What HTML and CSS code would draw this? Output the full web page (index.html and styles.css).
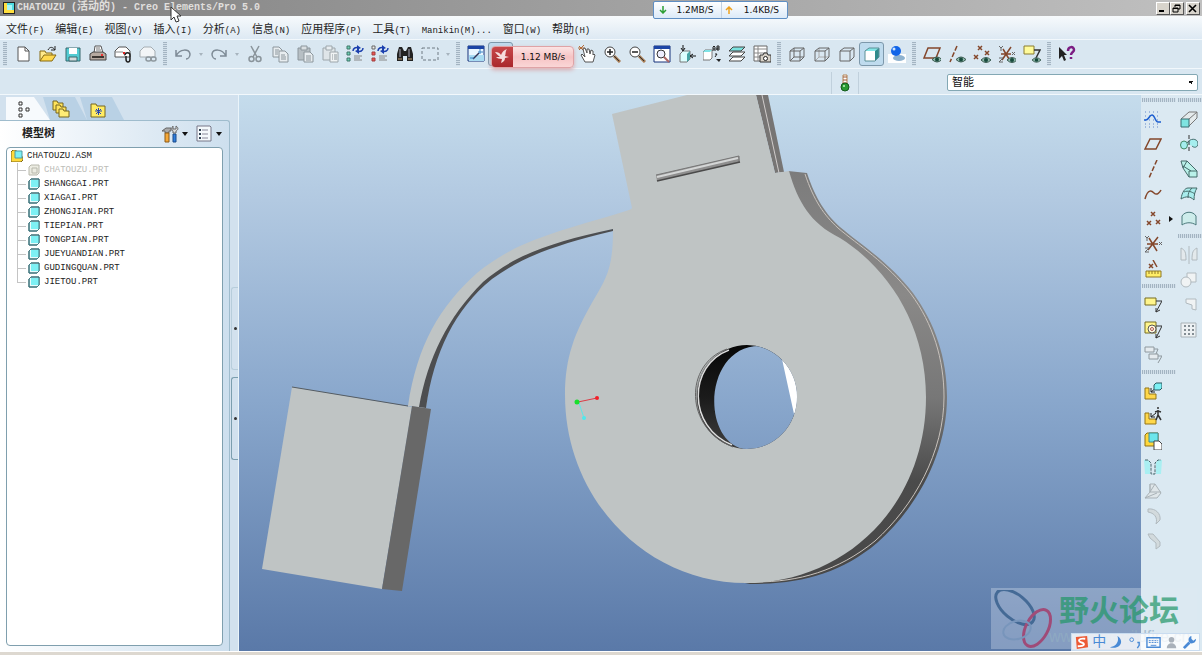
FILE: index.html
```html
<!doctype html>
<html lang="zh-CN">

<head>
  <meta charset="utf-8">
  <title>CHATOUZU (活动的) - Creo Elements/Pro 5.0</title>
  <link rel="stylesheet" href="styles.css">
</head>

<body>
  <!-- shared symbols -->
  <svg class="defs" width="0" height="0">
    <symbol id="eye" viewBox="0 0 10 6">
      <path d="M0 3Q5-2 10 3Q5 8 0 3z" fill="#8fb8ab" stroke="#3b5a50" />
      <circle cx="5" cy="3" r="2" fill="#174a3c" />
    </symbol>
    <symbol id="part" viewBox="0 0 12 12">
      <path d="M1 3l2-2h8v8l-2 2H1z" fill="#e9fbfb" stroke="#2c5961" />
      <path d="M3 2h8v7H3z" fill="#7df0f4" />
      <path d="M1 3l2-2h8v8l-2 2H1z" fill="none" stroke="#3f7a83" />
    </symbol>
    <symbol id="lens" viewBox="0 0 18 18">
      <path d="M11 11l6 6" stroke="#a77b52" stroke-width="3" />
      <path d="M10 10l6 6" stroke="#333" />
      <circle cx="7" cy="7" r="5" fill="#fff" stroke="#444" />
    </symbol>
    <symbol id="asm" viewBox="0 0 18 18">
      <path d="M1 6h4v6h7v5H1z" fill="#ffd84a" stroke="#937417" />
      <path d="M12 6L7 10m0-4v4h4" fill="none" stroke="#222" />
    </symbol>
  </svg>

  <header class="titlebar">
    <svg class="logo" viewBox="0 0 12 12"><path d="M0 0h12v12H0z" fill="#222" /><path d="M1 1h3v7h7v3H1z" fill="#ffdf3e" /><path d="M4 1h7v7H4z" fill="#50dbe0" /><path d="M4 3h5v5H4z" fill="#a8f5f5" /></svg>
    <h1>CHATOUZU (<span class="cn">活动的</span>) - Creo Elements/Pro 5.0</h1>
    <div class="window-buttons">
      <button aria-label="最小化"><svg viewBox="0 0 9 9"><path d="M1 7h5" stroke="#000" stroke-width="2" /></svg></button>
      <button aria-label="还原"><svg viewBox="0 0 9 9"><path d="M3 3V1h5v4H6M1 4h5v4H1zM3 1.500h5M1 4.500h5" fill="none" stroke="#000" /></svg></button>
      <button aria-label="关闭"><svg viewBox="0 0 9 9"><path d="M1 1l7 7m0-7l-7 7" stroke="#000" stroke-width="1.600" /></svg></button>
    </div>
  </header>

  <nav class="menubar">
    <button>文件<span>(F)</span></button>
    <button>编辑<span>(E)</span></button>
    <button>视图<span>(V)</span></button>
    <button>插入<span>(I)</span></button>
    <button>分析<span>(A)</span></button>
    <button>信息<span>(N)</span></button>
    <button>应用程序<span>(P)</span></button>
    <button>工具<span>(T)</span></button>
    <button><span>Manikin(M)...</span></button>
    <button>窗口<span>(W)</span></button>
    <button>帮助<span>(H)</span></button>
  </nav>

  <div class="toolbar">
    <div class="group">
      <button aria-label="新建"><svg viewBox="0 0 18 18"><path d="M4 2h7l4 4v10H4z" fill="#fff" stroke="#555" /><path d="M11 2v4h4" fill="none" stroke="#555" /></svg></button>
      <button aria-label="打开"><svg viewBox="0 0 18 18"><path d="M1 16V6h5l1 2h6v3" fill="#ffe98b" stroke="#876b13" /><path d="M1 16l4-6h12l-4 6z" fill="#ffd94f" stroke="#876b13" /><path d="M9 5c2-4 5-3 7 0m0-4v4h-4" fill="none" stroke="#222" /></svg></button>
      <button aria-label="保存"><svg viewBox="0 0 18 18"><path d="M2 3h14v13H2z" fill="#52cbd2" stroke="#38686f" /><path d="M5 3h8v6H5z" fill="#fff" /><path d="M5 12h8v4H5z" fill="#d5dadb" stroke="#38686f" /></svg></button>
      <button aria-label="打印"><svg viewBox="0 0 18 18"><path d="M5 8l1-7h6l2 7" fill="#fff" stroke="#555" /><path d="M1 9l3-2h10l3 2v6H1z" fill="#b7aaa0" stroke="#444" /><path d="M7 3h4M7 5h5" stroke="#777" /><path d="M3 12h12" stroke="#3d3732" stroke-width="2" /><path d="M12 10h2" stroke="#e33" stroke-width="2" /></svg></button>
      <button aria-label="附件发送"><svg viewBox="0 0 18 18"><path d="M1 6l4-4h7l4 4v6H1z" fill="#fff" stroke="#555" /><path d="M1 7h8l2 4" fill="none" stroke="#888" /><path d="M11 10c0-3 5-3 5 0v4c0 4-4 4-4 0v-3" fill="none" stroke="#222" stroke-width="1.500" /><path d="M9 8h2" stroke="#d22" stroke-width="2" /></svg></button>
      <button aria-label="链接发送"><svg viewBox="0 0 18 18"><path d="M1 6l4-4h7l4 4v6H1z" fill="#f2f5f7" stroke="#a5adb2" /><rect x="7" y="12" width="5" height="4" rx="2" fill="none" stroke="#8e989e" stroke-width="1.500" /><rect x="12" y="12" width="5" height="4" rx="2" fill="none" stroke="#8e989e" stroke-width="1.500" /></svg></button>
    </div>
    <div class="group">
      <button aria-label="撤消"><svg viewBox="0 0 18 18"><path d="M2 5v6h6M2 11c4-8 13-7 14-2 0 3-2 5-4 5" fill="none" stroke="#7e8b96" stroke-width="1.500" /></svg></button>
      <button class="drop off" aria-label="撤消列表"></button>
      <button aria-label="重做"><svg viewBox="0 0 18 18"><path d="M16 5v6h-6M16 11c-4-8-13-7-14-2 0 3 2 5 4 5" fill="none" stroke="#7e8b96" stroke-width="1.500" /></svg></button>
      <button class="drop off" aria-label="重做列表"></button>
      <button aria-label="剪切"><svg viewBox="0 0 18 18"><path d="M5 1l6 11M13 1L7 12" stroke="#8a949b" stroke-width="1.500" /><circle cx="5.500" cy="14" r="2.500" fill="none" stroke="#8a949b" stroke-width="1.500" /><circle cx="12.500" cy="14" r="2.500" fill="none" stroke="#8a949b" stroke-width="1.500" /></svg></button>
      <button aria-label="复制"><svg viewBox="0 0 18 18"><path d="M2 2h6l3 3v7H2z" fill="#e8edf0" stroke="#8c969c" /><path d="M8 6h6l3 3v8H8z" fill="#e8edf0" stroke="#8c969c" /><path d="M4 5h4M4 7h3M4 9h3M10 10h4M10 12h5M10 14h5" stroke="#8c969c" /></svg></button>
      <button aria-label="粘贴"><svg viewBox="0 0 18 18"><path d="M2 3h12v12H2z" fill="#b7bfc4" stroke="#8c969c" /><path d="M5 1h6v4H5z" fill="#d9dfe2" stroke="#8c969c" /><path d="M8 7h6l3 3v7H8z" fill="#e8edf0" stroke="#8c969c" /><path d="M10 11h5M10 13h5M10 15h5" stroke="#8c969c" /></svg></button>
      <button aria-label="选择性粘贴"><svg viewBox="0 0 18 18"><path d="M2 3h12v12H2z" fill="#dfe5e8" stroke="#9da6ab" /><path d="M5 1h6v4H5z" fill="#e8edf0" stroke="#9da6ab" /><path d="M9 7h8v10H9z" fill="#f0f3f4" stroke="#9da6ab" /><path d="M11 10h1M13 10h3M11 12h1M13 12h3M11 14h1M13 14h3" stroke="#8c969c" /></svg></button>
      <button aria-label="再生"><svg viewBox="0 0 18 18"><path d="M1 1h3v3H1zM1 7h3v3H1zM1 13h3v3H1z" fill="#6fd0b4" stroke="#3f7468" /><path d="M7 6c0-3 3-4 5-3M17 3c0 3-3 4-5 3" fill="none" stroke="#1b3fae" stroke-width="1.500" /><path d="M11 0l4 3-4 2zM13 4l-4 2 4 3z" fill="#1b3fae" /><path d="M8 11h8M8 13h6M8 15h8" stroke="#888" /></svg></button>
      <button aria-label="再生管理器"><svg viewBox="0 0 18 18"><path d="M1 1h3v3H1z" fill="#eee" stroke="#666" /><path d="M1 7h3v3H1zM1 13h3v3H1z" fill="#f05252" stroke="#a04040" /><path d="M7 6c0-3 3-4 5-3M17 3c0 3-3 4-5 3" fill="none" stroke="#1b3fae" stroke-width="1.500" /><path d="M11 0l4 3-4 2zM13 4l-4 2 4 3z" fill="#1b3fae" /><path d="M8 11h8M8 13h6M8 15h8" stroke="#888" /></svg></button>
      <button aria-label="查找"><svg viewBox="0 0 18 18"><path d="M3 2h3l2 4h2l2-4h3l2 7v7h-6v-5H7v5H1V9z" fill="#222" /><path d="M4 4v8M13 4v8" stroke="#aab" /><path d="M2 14h4M12 14h4" stroke="#c4a376" /></svg></button>
      <button aria-label="选取框"><svg viewBox="0 0 18 18"><path d="M1 3h16v12H1z" fill="none" stroke="#6f7b83" stroke-dasharray="3 2" /></svg></button>
      <button class="drop off" aria-label="选取选项"></button>
    </div>
    <div class="group">
      <button aria-label="重画"><svg viewBox="0 0 18 18"><path d="M1 1h16v15H1z" fill="#e9f6ff" stroke="#14307a" /><path d="M1 1h16v3H1z" fill="#1d45a5" /><path d="M2 10h15v6H2z" fill="#a9dbf2" /><path d="M6 14l6-6" stroke="#335" stroke-width="1.500" /><path d="M13 4v5M11 7h5M3 13h4" stroke="#3a83c4" /></svg></button>
      <button class="pressed" aria-label="旋转中心"><svg viewBox="0 0 18 18"><path d="M2 3h14v12H2z" fill="#fff" stroke="#555" /></svg></button>
      <button aria-label="定向模式"><svg viewBox="0 0 18 18"><path d="M3 2h5M10 2h5M3 5h4" stroke="#2843a0" stroke-width="2" /></svg></button>
      <button aria-label="外观库"><svg viewBox="0 0 18 18"><circle cx="9" cy="9" r="6" fill="#d9c3cb" /></svg></button>
      <button class="drop off" aria-label="外观列表"></button>
      <button aria-label="平移"><svg viewBox="0 0 18 18"><path d="M1 1l5 5M6 0L1 5M0 3h7" stroke="#b36a38" /><path d="M7 17l-4-7 1-1 3 3-2-8 2-1 2 5V4h2l1 5 1-4 2 1v4l1-1 1 1-2 7z" fill="#fff" stroke="#555" /></svg></button>
      <button aria-label="放大"><svg viewBox="0 0 18 18"><use href="#lens" /><path d="M4 7h6M7 4v6" stroke="#222" stroke-width="1.500" /></svg></button>
      <button aria-label="缩小"><svg viewBox="0 0 18 18"><use href="#lens" /><path d="M4 7h6" stroke="#222" stroke-width="1.500" /></svg></button>
      <button aria-label="重新调整"><svg viewBox="0 0 18 18"><path d="M1 1h16v16H1z" fill="#fff" stroke="#14307a" /><path d="M1 1h16v3H1z" fill="#1d45a5" /><circle cx="8" cy="9" r="4" fill="#eef" stroke="#333" /><path d="M11 12l5 5" stroke="#a66" stroke-width="2" /></svg></button>
      <button aria-label="重定向"><svg viewBox="0 0 18 18"><path d="M2 9l3-3h7v8l-3 3H2z" fill="#dff" stroke="#777" /><path d="M9 9l3-3v8l-3 3z" fill="#48a6a6" /><path d="M5 0v5M3 3l2 3 2-3M18 11h-5M15 9l-3 2 3 2" fill="none" stroke="#111" /></svg></button>
      <button aria-label="已命名视图"><svg viewBox="0 0 18 18"><path d="M0 7l2-2h7v8l-2 2H0z" fill="#fff" stroke="#777" /><path d="M2 5h7l-2 2H0z" fill="#7fe3e6" /><path d="M10 6V2l1-1 1 1v4M10 4h2M14 1h2v2h-2v2h2V3M14 1v4M12 9h2l-2 3" fill="none" stroke="#222" /><path d="M13 14h5l-2 3z" fill="#222" /></svg></button>
      <button aria-label="层"><svg viewBox="0 0 18 18"><path d="M1 16l4-4h12l-4 4zM1 11l4-4h12l-4 4z" fill="#fff" stroke="#444" /><path d="M1 6l4-4h12l-4 4z" fill="#7be2df" stroke="#444" /></svg></button>
      <button aria-label="视图管理器"><svg viewBox="0 0 18 18"><path d="M1 1h13v15H1z" fill="#fff" stroke="#666" /><path d="M1 4h13M1 8h13M1 12h13M5 1v15" stroke="#888" /><path d="M7 10h3l1-2h3l1 2h3v7H7z" fill="#d8d2c8" stroke="#333" /><circle cx="12.500" cy="13.500" r="2" fill="#fff" stroke="#222" /></svg></button>
    </div>
    <div class="group">
      <button aria-label="线框"><svg viewBox="0 0 18 18"><path d="M2 6l4-3h10v9l-4 4H2zM2 6h10v10M12 6l4-3M6 3v9h10M6 12l-4 4" fill="none" stroke="#666" /></svg></button>
      <button aria-label="隐藏线"><svg viewBox="0 0 18 18"><path d="M6 3v9h10M6 12l-4 4" fill="none" stroke="#aaa" /><path d="M2 6l4-3h10v9l-4 4H2zM2 6h10v10M12 6l4-3" fill="none" stroke="#666" /></svg></button>
      <button aria-label="消隐"><svg viewBox="0 0 18 18"><path d="M2 6l4-3h10v9l-4 4H2zM2 6h10v10M12 6l4-3" fill="none" stroke="#666" /></svg></button>
      <button class="pressed" aria-label="着色"><svg viewBox="0 0 18 18"><path d="M2 6h10v10H2z" fill="#fff" /><path d="M2 6l4-3h10l-4 3z" fill="#84e6e7" /><path d="M12 6l4-3v9l-4 4z" fill="#2f8a8b" /><path d="M2 6l4-3h10v9l-4 4H2z" fill="none" stroke="#5a8f96" /></svg></button>
      <button aria-label="增强的真实感"><svg viewBox="0 0 18 18"><path d="M0 9h18v9H0z" fill="#fff" /><ellipse cx="11" cy="13" rx="6" ry="3" fill="#8eb2cf" /><circle cx="8" cy="6" r="5" fill="#1265e8" /><circle cx="6" cy="4" r="1.500" fill="#cfe5ff" /></svg></button>
    </div>
    <div class="group">
      <button aria-label="平面显示"><svg viewBox="0 0 18 18"><path d="M1 13L5 3h12l-4 10z" fill="none" stroke="#84472b" stroke-width="1.500" /><use href="#eye" x="9" y="11" width="10" height="7" /></svg></button>
      <button aria-label="轴显示"><svg viewBox="0 0 18 18"><path d="M9 1L2 17" stroke="#84472b" stroke-width="1.500" stroke-dasharray="5 2" /><use href="#eye" x="8" y="11" width="10" height="7" /></svg></button>
      <button aria-label="点显示"><svg viewBox="0 0 18 18"><path d="M5 1l4 4m0-4L5 5M12 6l4 4m0-4l-4 4M1 10l4 4m0-4l-4 4" stroke="#84472b" stroke-width="1.500" /><use href="#eye" x="8" y="12" width="10" height="6" /></svg></button>
      <button aria-label="坐标系显示"><svg viewBox="0 0 18 18"><path d="M3 9h10M13 2L4 15M5 4l6 10" stroke="#84472b" stroke-width="1.500" /><path d="M1 1l2 2 2-2M3 3v3M14 7l3 3m0-3l-3 3M1 13h4l-4 4h4" fill="none" stroke="#666" /><use href="#eye" x="9" y="12" width="10" height="6" /></svg></button>
      <button aria-label="注释显示"><svg viewBox="0 0 18 18"><path d="M1 1h10v8H1z" fill="#fffb9b" stroke="#8a7c30" /><path d="M11 5h6l-4 8" fill="none" stroke="#333" stroke-width="1.500" /><use href="#eye" x="9" y="12" width="9" height="6" /></svg></button>
    </div>
    <div class="group">
      <button aria-label="上下文帮助"><svg viewBox="0 0 18 18"><path d="M1 2v12l3-3 2 5 2-1-2-5h3z" fill="#222" /><path d="M10 6c0-5 6-5 6-1 0 2-3 2-3 5m0 2v2" fill="none" stroke="#7c1d83" stroke-width="2.500" /></svg></button>
    </div>
  </div>

  <div class="filterbar">
    <span class="status"><svg viewBox="0 0 10 18"><path d="M3 1h4v10H3z" fill="#fff" stroke="#b28253" /><path d="M3 3h4M3 6h4M3 9h4" stroke="#9d5630" /><circle cx="5" cy="13" r="4" fill="#2a9a32" stroke="#145a1b" /><circle cx="4" cy="12" r="1" fill="#c5f5c5" /></svg></span>
    <select aria-label="选取过滤器">
      <option>智能</option>
    </select>
  </div>

  <main class="workspace">
    <aside class="navigator">
      <div class="tabs">
        <button class="active" aria-label="模型树"><svg viewBox="0 0 18 18"><path d="M4 2h3v3H4zM4 8h3v3H4zM4 14h3v3H4zM11 8h3v3h-3z" fill="#fff" stroke="#333" /></svg></button>
        <button aria-label="文件夹浏览器"><svg viewBox="0 0 18 18"><path d="M1 1h4l1 2h5v7H1z" fill="#ffe35b" stroke="#776620" /><path d="M4 5h4l1 2h5v6H4z" fill="#ffe35b" stroke="#776620" /><path d="M7 9h4l1 2h5v6H7z" fill="#ffec76" stroke="#776620" /></svg></button>
        <button aria-label="收藏夹"><svg viewBox="0 0 18 18"><path d="M2 4h5l1 2h8v11H2z" fill="#ffec64" stroke="#776620" /><path d="M6 11h7M9.500 8v7M7 9l5 5m0-5l-5 5" stroke="#2545b5" /></svg></button>
      </div>
      <div class="panel">
        <div class="panel-head">
          <h2>模型树</h2>
          <button aria-label="设置"><svg viewBox="0 0 18 18"><path d="M1 6l4-3h5v3H8v2H4V6z" fill="#aaa" stroke="#666" /><path d="M4 8h4v9H4z" fill="#f5a838" stroke="#8c5a17" /><path d="M12 9h3v8h-3z" fill="#2f7ede" stroke="#1d4a88" /><path d="M12 8V6c-2-2-1-4 0-5v3h3V1c3 2 2 4 0 5v2z" fill="#ddd" stroke="#666" /></svg></button>
          <button class="drop" aria-label="设置选项"></button>
          <button aria-label="显示"><svg viewBox="0 0 18 18"><path d="M2 1h13l1 1v14H2z" fill="#f4f9fc" stroke="#778" /><path d="M4 5h2M4 9h2M4 13h2" stroke="#345" stroke-width="2" /><path d="M7 5h6M7 9h6M7 13h6" stroke="#889" /></svg></button>
          <button class="drop" aria-label="显示选项"></button>
        </div>
        <ul class="tree">
          <li><svg class="root" viewBox="0 0 12 12"><path d="M0 2l2-2h3v7h7v3l-2 2H0z" fill="#ffda3c" stroke="#7c6416" /><path d="M4 1h7v7H4z" fill="#7df0f4" stroke="#4e99a2" /></svg>CHATOUZU.ASM
            <ul>
              <li class="hidden-part"><svg viewBox="0 0 12 12"><path d="M1 3l2-2h8v8l-2 2H1zM4 4h5v5H4z" fill="#ecece2" stroke="#b8b8ac" /></svg>CHATOUZU.PRT</li>
              <li><svg><use href="#part" /></svg>SHANGGAI.PRT</li>
              <li><svg><use href="#part" /></svg>XIAGAI.PRT</li>
              <li><svg><use href="#part" /></svg>ZHONGJIAN.PRT</li>
              <li><svg><use href="#part" /></svg>TIEPIAN.PRT</li>
              <li><svg><use href="#part" /></svg>TONGPIAN.PRT</li>
              <li><svg><use href="#part" /></svg>JUEYUANDIAN.PRT</li>
              <li><svg><use href="#part" /></svg>GUDINGQUAN.PRT</li>
              <li><svg><use href="#part" /></svg>JIETOU.PRT</li>
            </ul>
          </li>
        </ul>
      </div>
      <div class="sashes">
        <button aria-label="折叠"></button>
        <button class="dark" aria-label="展开"></button>
      </div>
    </aside>

    <section class="viewport">
      <svg viewBox="239 95 902 556" preserveAspectRatio="xMidYMin slice">
        <defs>
          <linearGradient id="rim" x1="0" y1="0" x2="0" y2="1">
            <stop offset="0" stop-color="#7c7c7c" />
            <stop offset="0.300" stop-color="#8a8988" />
            <stop offset="0.550" stop-color="#777" />
            <stop offset="0.750" stop-color="#4b4b4b" />
            <stop offset="1" stop-color="#484848" />
          </linearGradient>
          <linearGradient id="bore" x1="0" y1="0" x2="0" y2="1">
            <stop offset="0" stop-color="#050505" />
            <stop offset="0.500" stop-color="#1b1b1b" />
            <stop offset="1" stop-color="#444" />
          </linearGradient>
          <linearGradient id="sky" gradientUnits="userSpaceOnUse" x1="0" y1="95" x2="0" y2="651">
            <stop offset="0" stop-color="#c5dcec" />
            <stop offset="0.190" stop-color="#b2c9e1" />
            <stop offset="0.550" stop-color="#89a7cc" />
            <stop offset="1" stop-color="#5a79a8" />
          </linearGradient>
          <clipPath id="hole"><ellipse cx="747" cy="397" rx="50" ry="52" /></clipPath>
        </defs>

        <!-- cable -->
        <path d="M408 406C417 345 440 306 477 273C520 238 560 232 632 209L640 224L613 229C540 245 497 266 469 298C445 326 431 365 426 408z" fill="#bfc4c4" />
        <path d="M419 407C428 358 447 318 483 282C514 255 552 242 613 229L613 231C555 245 522 257 492 279C455 309 434 352 426 408z" fill="#4d4e50" />

        <!-- connector block -->
        <path d="M292 387L412 407L382 589L262 569z" fill="#bfc4c4" />
        <path d="M292 387L408 406" stroke="#555c62" />
        <path d="M412 406L431 409L402 591L382 589z" fill="#686868" />

        <!-- side faces of the body -->
        <path d="M788 171L807 173C816 200 826 214 840 227C860 244 888 261 913 293C935 323 947 358 947 397C947 453 917 508 877 543C840 574 800 584 750 584L730 580L780 360z" fill="url(#rim)" />
        <path d="M805 174C814 201 824 215 838 228C858 245 886 262 911 294C933 324 944 359 944 397C944 452 914 506 875 541C838 571 799 582 755 582" fill="none" stroke="#c8c2bc" />
        <path d="M756 95H768L784 172L775 173z" fill="#777574" />
        <path d="M762 95L779 173" stroke="#d0cccb" />

        <!-- front face -->
        <path d="M612 114L687 95H756L775 173L789 171C798 202 810 223 840 238C888 268 926 325 926 397C926 505 846 583 746 583C646 583 565 499 565 395C565 357 575 332 593 301C608 276 613 266 613 229L632 208z" fill="#bfc4c4" />
        <path d="M656 175L739 156L740 162L657 181z" fill="#8f8f8f" />
        <path d="M656 175L739 156V162" fill="none" stroke="#777" />
        <path d="M657 181L740 162" stroke="#4a4a4a" stroke-width="1.500" />
        <path d="M657 177L738 158" stroke="#d4d6d6" stroke-width="2" />

        <!-- bore -->
        <g clip-path="url(#hole)">
          <path d="M690 340H800V455H690z" fill="url(#bore)" />
          <path d="M761 346C702 344 699 449 751 450H800V340z" fill="url(#sky)" />
          <path d="M782 359L794 414L805 400V350z" fill="#fff" />
        </g>
        <path d="M727 349C684 364 684 428 733 447" fill="none" stroke="#666" />
        <path d="M729 350C688 365 687 427 732 445" fill="none" stroke="#ddd" stroke-width="1.500" />
        <path d="M729 349C686 364 685 428 732 446" fill="none" stroke="#555" stroke-width="0.600" />

        <!-- spin centre -->
        <path d="M578 402L597 398" stroke="#dc3b45" />
        <path d="M579 403L584 418" stroke="#61e5e6" />
        <circle cx="577" cy="402" r="2.500" fill="#18e02c" />
        <circle cx="597" cy="398" r="2" fill="#f21f29" />
        <circle cx="584" cy="418" r="2" fill="#50e8ec" />
      </svg>
    </section>

    <aside class="feature-tools">
      <div class="column">
        <div class="vgroup">
          <button aria-label="草绘"><svg viewBox="0 0 18 18"><path d="M1 2h16M1 6h16M1 10h16M1 14h16M1 17h16" stroke="#6387c9" stroke-dasharray="1 3" /><path d="M0 10h2c3 0 3-5 6-5s3 7 6 7h3" fill="none" stroke="#1d5fd0" stroke-width="1.500" /></svg></button>
          <button aria-label="基准平面"><svg viewBox="0 0 18 18"><path d="M1 14L6 4h11l-5 10z" fill="none" stroke="#84472b" stroke-width="1.500" /></svg></button>
          <button aria-label="基准轴"><svg viewBox="0 0 18 18"><path d="M13 0L5 18" stroke="#84472b" stroke-width="1.500" stroke-dasharray="5 2" /></svg></button>
          <button aria-label="基准曲线"><svg viewBox="0 0 18 18"><path d="M1 14C4 3 8 6 10 8c3 3 6-1 7-3" fill="none" stroke="#84472b" stroke-width="1.500" /></svg></button>
          <button aria-label="基准点"><svg viewBox="0 0 18 18"><path d="M7 2l4 4m0-4L7 6M12 10l4 4m0-4l-4 4M3 11l4 4m0-4l-4 4" stroke="#84472b" stroke-width="1.500" /></svg></button>
          <button aria-label="坐标系"><svg viewBox="0 0 18 18"><path d="M3 9h11M14 2L4 15M5 3l8 13" stroke="#84472b" stroke-width="1.500" /><path d="M1 1l2 2 2-2M3 3v3M15 7l3 3m0-3l-3 3M1 13h4l-4 4h4" fill="none" stroke="#666" /></svg></button>
          <button aria-label="分析特征"><svg viewBox="0 0 18 18"><path d="M2 11h15v6H2z" fill="#ffee67" stroke="#8f7925" /><path d="M5 11v3M8 11v3M11 11v3M14 11v3" stroke="#8f7925" /><path d="M5 4l4 4m0-4L5 8M9 0l4 7" stroke="#84472b" stroke-width="1.500" /></svg></button>
        </div>
        <div class="vgroup">
          <button aria-label="注释"><svg viewBox="0 0 18 18"><path d="M1 2h11v7H1z" fill="#fff58b" stroke="#776d23" /><path d="M12 5h6l-6 11m0-4v4l4-2" fill="none" stroke="#333" /></svg></button>
          <button aria-label="传播注释"><svg viewBox="0 0 18 18"><path d="M1 1h11v11H1z" fill="#fff58b" stroke="#776d23" /><circle cx="8" cy="8" r="4" fill="#fffbe0" stroke="#555" /><circle cx="8" cy="8" r="1.500" fill="none" stroke="#a55" /><path d="M12 5h6l-6 12m0-4v4l4-2" fill="none" stroke="#333" /></svg></button>
          <button aria-label="注释链"><svg viewBox="0 0 18 18"><path d="M1 1h9v5H1zM5 8h9v5H5z" fill="#e5ebef" stroke="#8e989e" /><path d="M10 3h4l-2 5M14 10h4l-4 7" fill="none" stroke="#8e989e" /></svg></button>
        </div>
        <div class="vgroup">
          <button aria-label="装配"><svg viewBox="0 0 18 18"><use href="#asm" /><path d="M10 3l2-2h6v5l-2 2h-6z" fill="#7df0f4" stroke="#2c5961" /></svg></button>
          <button aria-label="人体模型"><svg viewBox="0 0 18 18"><use href="#asm" /><path d="M14 3v6M11 5l3-1 3 1M14 8l-2 5M14 8l3 5M14 0v2" fill="none" stroke="#333" stroke-width="1.500" /></svg></button>
          <button aria-label="创建元件"><svg viewBox="0 0 18 18"><path d="M1 3l2-2h11v11l-2 2H1z" fill="#ffd83d" stroke="#907216" /><path d="M5 1h9v9H5z" fill="#6ce6eb" stroke="#3d8e96" /><path d="M10 9h5l3 3v6h-8z" fill="#fff" stroke="#444" /></svg></button>
          <button aria-label="孔"><svg viewBox="0 0 18 18"><path d="M0 3h4l2 3v11H1zM18 3h-4l-2 3v11h5z" fill="#a9eff2" /><path d="M1 3h3l3 3v11h4V6l3-3h3" fill="none" stroke="#47676d" stroke-dasharray="3 1" /></svg></button>
          <button aria-label="拔模"><svg viewBox="0 0 18 18"><path d="M6 2h5l6 9-4 5H1l5-6z" fill="#dfe6e9" stroke="#a9b2b7" /><path d="M6 2v8l5-8M1 16l12-5M6 10h11" fill="none" stroke="#a9b2b7" /></svg></button>
          <button aria-label="倒圆角"><svg viewBox="0 0 18 18"><path d="M4 2c8-1 13 5 12 11l-4 4c2-7-2-11-8-12z" fill="#d2dadd" stroke="#b1babf" /></svg></button>
          <button aria-label="倒角"><svg viewBox="0 0 18 18"><path d="M4 2h5l7 8v4l-4 3v-6L6 6z" fill="#d2dadd" stroke="#b1babf" /></svg></button>
        </div>
      </div>
      <div class="column">
        <div class="vgroup">
          <button aria-label="拉伸"><svg viewBox="0 0 18 18"><path d="M1 9l8-7h8v6l-8 8z" fill="#e4eaec" stroke="#777" /><path d="M9 9l8-7" stroke="#777" /><path d="M1 9h8v8H1z" fill="#7fe4e1" stroke="#386d70" /></svg></button>
          <button aria-label="旋转"><svg viewBox="0 0 18 18"><ellipse cx="4" cy="10" rx="3.500" ry="4" fill="#a5eeee" stroke="#486" /><path d="M7 8c3-5 10-5 11 0 0 5-4 5-6 3" fill="#a5eeee" stroke="#486f70" /><path d="M9 0v18" stroke="#333" stroke-dasharray="4 2" /></svg></button>
          <button aria-label="可变截面扫描"><svg viewBox="0 0 18 18"><path d="M1 1h6l10 10v6H9L3 8z" fill="#b9f1e9" stroke="#456a69" /><path d="M9 17v-6h8M7 1L3 8M3 6l8 5" fill="none" stroke="#456a69" /></svg></button>
          <button aria-label="边界混合"><svg viewBox="0 0 18 18"><path d="M1 14c1-7 4-11 7-11h9c-2 3-3 7-3 12-4-4-8-4-13-1z" fill="#a8ecec" stroke="#456a69" /><path d="M4 7c4-2 8 0 11 2M12 3C9 6 8 8 8 13" fill="none" stroke="#456a69" /></svg></button>
          <button class="fly" aria-label="造型"><svg viewBox="0 0 18 18"><path d="M2 15V6c3-5 11-5 14 0v9c-4-3-10-3-14 0z" fill="#cdeceb" stroke="#4c7a7d" /></svg></button>
        </div>
        <div class="vgroup">
          <button aria-label="镜像"><svg viewBox="0 0 18 18"><path d="M1 2c4 2 5 4 5 12H1zM17 2c-4 2-5 4-5 12h5z" fill="#e3e9ec" stroke="#b1babf" /><path d="M9 0v18" stroke="#b1babf" /></svg></button>
          <button aria-label="合并"><svg viewBox="0 0 18 18"><path d="M7 2h9v9H7z" fill="#f0f3f4" stroke="#b1babf" /><circle cx="6" cy="11" r="5" fill="#f0f3f4" stroke="#b1babf" /></svg></button>
          <button aria-label="修剪"><svg viewBox="0 0 18 18"><path d="M6 3h10v11l-4-1V9L6 7z" fill="#f0f3f4" stroke="#b1babf" /></svg></button>
          <button aria-label="阵列"><svg viewBox="0 0 18 18"><path d="M1 2h15v14H1z" fill="#edf1f3" stroke="#a9b2b7" /><path d="M4 5h10M4 9h10M4 13h10" stroke="#848e94" stroke-width="2" stroke-dasharray="2 2" /></svg></button>
        </div>
      </div>
    </aside>
  </main>
  <footer class="bottom-edge"></footer>

  <!-- things floating over the application window -->
  <svg class="cursor" viewBox="0 0 12 18"><path d="M1 1v13l3-3 2 5 3-1-2-5h4z" fill="#fff" stroke="#333" /></svg>

  <div class="net-meter">
    <span><svg viewBox="0 0 8 8"><path d="M4 0v7M1 4l3 3 3-3" fill="none" stroke="#2c9e35" stroke-width="1.500" /></svg>1.2MB/S</span>
    <span><svg viewBox="0 0 8 8"><path d="M4 8V1M1 4l3-3 3 3" fill="none" stroke="#efa21e" stroke-width="1.500" /></svg>1.4KB/S</span>
  </div>

  <div class="speed-ball">
    <svg viewBox="0 0 21 22"><path d="M3 6c3 0 5 1 6 3 1-3 3-5 6-6-2 3-1 5-2 7l4 1-4 1c0 3-2 4-4 5l1-4c-3 0-5-1-6-2h4C6 9 4 8 3 6z" fill="#f6dddd" /></svg>
    <span>1.12 MB/s</span>
  </div>

  <div class="watermark">
    <svg viewBox="0 0 60 58"><ellipse cx="22" cy="17" rx="23" ry="12" transform="rotate(40 22 17)" fill="none" stroke="#3e6590" stroke-width="3" /><ellipse cx="44" cy="38" rx="20" ry="11" transform="rotate(-62 44 38)" fill="none" stroke="#b0406c" stroke-width="3" /><ellipse cx="24" cy="40" rx="14" ry="9" transform="rotate(-15 24 40)" fill="none" stroke="#7f9cc0" stroke-width="2" /></svg>
    <div>
      <strong>野火论坛</strong>
      <span>www.proewildfire.cn</span>
    </div>
  </div>

  <div class="ime">
    <svg viewBox="0 0 16 16"><path d="M2 2l12-1 1 12-12 2z" fill="#ed5a35" /><path d="M12 4c-8-1-8 3-4 4s4 4-4 4" fill="none" stroke="#fff" stroke-width="2" /></svg>
    <b>中</b>
    <svg viewBox="0 0 16 16"><path d="M9 1c8 5 3 15-8 12 7-1 10-6 8-12z" fill="#4a8ad5" /></svg>
    <svg viewBox="0 0 16 16"><circle cx="5" cy="5" r="2" fill="none" stroke="#4a8ad5" /><path d="M11 8h2v3l-2 3" fill="none" stroke="#4a8ad5" stroke-width="1.500" /></svg>
    <svg viewBox="0 0 16 16"><path d="M1 3h14v10H1z" fill="none" stroke="#4a8ad5" stroke-width="1.500" /><path d="M3 6h10M3 8h10" stroke="#4a8ad5" stroke-dasharray="2 1" /><path d="M5 11h6" stroke="#4a8ad5" /></svg>
    <svg viewBox="0 0 16 16"><circle cx="8" cy="5" r="3" fill="#a9b1ba" /><path d="M3 14c0-7 10-7 10 0z" fill="#a9b1ba" /></svg>
    <svg viewBox="0 0 16 16"><path d="M2 14l6-6" stroke="#4a8ad5" stroke-width="3" /><path d="M10 1c-4 1-4 7 0 8 3 0 5-2 5-5l-3 2-2-2z" fill="#4a8ad5" /></svg>
  </div>
</body>

</html>
```
FILE: styles.css
```css
* {
  box-sizing: border-box;
}

body {
  margin: 0;
  height: 100vh;
  display: flex;
  flex-direction: column;
  overflow: hidden;
  background: #dbe9f3;
  font-family: "Liberation Mono", "Noto Sans CJK SC", monospace;
  font-size: 9px;
  color: #222;
}

h1,
h2,
ul {
  margin: 0;
  padding: 0;
  list-style: none;
}

button {
  margin: 0;
  padding: 0;
  border: 0;
  background: none;
  font: inherit;
  color: inherit;
}

svg {
  display: block;
  flex: none;
}

.defs {
  position: absolute;
}

/* title bar */
.titlebar {
  height: 16px;
  flex: none;
  display: flex;
  align-items: center;
  gap: 2px;
  padding: 0 2px 0 3px;
  background: linear-gradient(90deg, #808080, #c0c0c0);
}

.titlebar .logo {
  width: 12px;
  height: 12px;
}

.titlebar h1 {
  flex: 1;
  font-size: 10px;
  line-height: 16px;
  color: #e0dfdd;
}

.titlebar .cn {
  font-size: 11px;
  line-height: 11px;
}

.window-buttons {
  display: flex;
}

.window-buttons button {
  width: 14px;
  height: 13px;
  padding: 1px;
  background: #d8d4cc;
  border: 1px solid;
  border-color: #fff #555 #555 #fff;
}

.window-buttons button:last-child {
  margin-left: 2px;
}

.window-buttons svg {
  width: 9px;
  height: 9px;
}

/* menu */
.menubar {
  height: 23px;
  flex: none;
  display: flex;
  align-items: center;
  gap: 11px;
  padding: 6px 6px 0;
  background: linear-gradient(#f7fafc, #dde9f3);
}

.menubar button {
  font-size: 11px;
  line-height: 16px;
  white-space: nowrap;
}

.menubar span {
  font-size: 9px;
}

/* main toolbar */
.toolbar {
  height: 30px;
  flex: none;
  display: flex;
  align-items: center;
  padding-left: 3px;
  border-top: 1px solid #f2f8fc;
  border-bottom: 1px solid #f2f8fc;
  background: #d9e7f1;
}

.group {
  display: flex;
  align-items: center;
  padding-right: 3px;
}

.group::before {
  content: "";
  width: 4px;
  height: 24px;
  margin-right: 3px;
  background: repeating-linear-gradient(#a3b4c2 0 1px, #d3e0ea 1px 2px);
}

.group button {
  width: 25px;
  height: 24px;
  display: flex;
  align-items: center;
  justify-content: center;
}

.group svg {
  width: 18px;
  height: 18px;
}

.group .pressed {
  border: 1px solid #7d98ab;
  border-radius: 3px;
  background: #bfdbee;
}

.drop::after {
  content: "";
  border: 3px solid transparent;
  border-top: 4px solid #111;
  border-bottom: 0;
}

.group .drop {
  width: 11px;
}

.drop.off::after {
  border-width: 2px;
  border-top: 3px solid #a7b4be;
  border-bottom: 0;
}

/* selection filter */
.filterbar {
  height: 26px;
  flex: none;
  display: flex;
  justify-content: flex-end;
  align-items: center;
  gap: 88px;
  padding: 2px 4px 0 0;
  border-bottom: 1px solid #f2f8fc;
  background: #d9e7f1;
}

.status {
  width: 28px;
  height: 22px;
  display: flex;
  align-items: center;
  justify-content: center;
  border: solid #c0d0dc;
  border-width: 0 1px;
}

.status svg {
  width: 10px;
  height: 18px;
}

.filterbar select {
  width: 251px;
  height: 17px;
  padding: 0 4px;
  appearance: none;
  border: 1px solid #83a8b4;
  border-radius: 2px;
  background:
    linear-gradient(45deg, transparent 50%, #111 50%) no-repeat right 6px center / 3px 3px,
    linear-gradient(-45deg, transparent 50%, #111 50%) no-repeat right 3px center / 3px 3px,
    #fff;
  font-family: "Liberation Sans", "Noto Sans CJK SC", sans-serif;
  font-size: 11px;
  line-height: 15px;
  color: #111;
}

/* workspace */
.workspace {
  flex: 1;
  min-height: 0;
  display: flex;
}

.navigator {
  width: 239px;
  flex: none;
  display: grid;
  grid-template-columns: 230px 1fr;
  grid-template-rows: 25px 1fr;
  background: #d2e1ee;
  border-right: 1px solid #eaf4fa;
}

.tabs {
  grid-column: 1 / 3;
  display: flex;
  align-items: flex-end;
  padding-left: 6px;
}

.tabs button {
  width: 44px;
  height: 23px;
  margin-right: -7px;
  padding: 1px 0 0 9px;
  background: #b9d1e5;
  clip-path: polygon(0 0, 28px 0, 100% 100%, 0 100%);
}

.tabs button + button {
  clip-path: polygon(0 0, 32px 0, 100% 100%, 7px 100%);
}

.tabs .active {
  background: #f7fafd;
}

.tabs svg {
  width: 18px;
  height: 18px;
}

.panel {
  display: flex;
  flex-direction: column;
  padding: 0 6px 5px;
  border-top: 1px solid #9fbccd;
  border-right: 1px solid #9fbccd;
  border-top-right-radius: 3px;
  background: linear-gradient(90deg, #fff, #cddfee);
}

.panel-head {
  height: 26px;
  flex: none;
  display: flex;
  align-items: center;
}

.panel-head h2 {
  flex: 1;
  padding-left: 16px;
  font-size: 11px;
  line-height: 16px;
}

.panel-head button {
  height: 18px;
  display: flex;
  align-items: center;
}

.panel-head svg {
  width: 18px;
  height: 18px;
}

.panel-head .drop {
  width: 16px;
  padding-left: 3px;
}

.panel-head .drop:last-child {
  width: 10px;
}

.tree {
  flex: 1;
  padding: 1px 4px;
  border: 1px solid #7f9fae;
  border-radius: 4px;
  background: #fff;
  line-height: 14px;
}

.tree svg {
  width: 12px;
  height: 12px;
  display: inline-block;
  vertical-align: middle;
  margin-right: 4px;
}

.tree ul {
  margin-left: 6px;
}

.tree ul li {
  height: 14px;
  padding-left: 11px;
  white-space: nowrap;
  background:
    linear-gradient(#c4c4c4, #c4c4c4) no-repeat 0 0 / 1px 14px,
    linear-gradient(#c4c4c4, #c4c4c4) no-repeat 0 7px / 9px 1px;
}

.tree ul li:last-child {
  background-size: 1px 7px, 9px 1px;
}

.hidden-part {
  color: #bdbdb8;
}

.sashes {
  display: flex;
  flex-direction: column;
  gap: 7px;
  padding: 167px 0 0 1px;
}

.sashes button {
  height: 83px;
  display: flex;
  align-items: center;
  justify-content: center;
  border: 1px solid #b7cddb;
  border-right: 0;
  border-radius: 3px 0 0 3px;
}

.sashes .dark {
  border-color: #7b9eae;
}

.sashes button::after {
  content: "";
  width: 3px;
  height: 3px;
  border-radius: 50%;
  background: #333;
}

.viewport {
  flex: 1;
  min-width: 0;
  background: linear-gradient(#c5dcec, #b2c9e1 19%, #89a7cc 55%, #5a79a8);
}

.viewport > svg {
  width: 100%;
  height: 100%;
}

/* feature tools on the right */
.feature-tools {
  width: 61px;
  flex: none;
  display: flex;
  gap: 2px;
  padding-left: 1px;
  background: #dbe9f2;
}

.column {
  width: 34px;
}

.column + .column {
  width: 24px;
}

.vgroup::before {
  content: "";
  display: block;
  height: 4px;
  margin: 3px 0 4px;
  background: repeating-linear-gradient(90deg, #a3b4c2 0 1px, #d3e0ea 1px 2px);
}

.vgroup button {
  width: 22px;
  height: 25px;
  display: flex;
  align-items: center;
  justify-content: center;
}

.vgroup svg {
  width: 18px;
  height: 18px;
}

.vgroup .fly {
  position: relative;
}

.fly::before {
  content: "";
  position: absolute;
  left: -9px;
  border: 3px solid transparent;
  border-left: 4px solid #111;
  border-right: 0;
}

.bottom-edge {
  height: 4px;
  flex: none;
  border-top: 1px solid #fff;
  background: #ddd8d0;
}

/* overlays */
.cursor {
  position: absolute;
  left: 170px;
  top: 6px;
  width: 12px;
  height: 18px;
}

.net-meter {
  position: absolute;
  left: 653px;
  top: 1px;
  width: 135px;
  height: 18px;
  display: flex;
  border: 1px solid #5f8fc4;
  border-radius: 2px;
  background: linear-gradient(#fff, #dceaf8);
  font-family: "DejaVu Sans", sans-serif;
  font-size: 9px;
  color: #111;
}

.net-meter span {
  flex: 1;
  display: flex;
  align-items: center;
  justify-content: space-between;
  padding: 0 7px 0 5px;
}

.net-meter span + span {
  padding: 0 8px 0 3px;
  border-left: 1px solid #c3d2e2;
}

.net-meter svg {
  width: 8px;
  height: 8px;
}

.speed-ball {
  position: absolute;
  left: 491px;
  top: 46px;
  width: 83px;
  height: 22px;
  display: flex;
  align-items: center;
  overflow: hidden;
  border: 1px solid #dfa3a6;
  border-radius: 4px;
  background: linear-gradient(#fbe4e4, #f6c3c4 50%, #fad6d6);
  box-shadow: 0 2px 4px #d9a9ad;
  font-family: "DejaVu Sans", sans-serif;
  font-size: 9px;
  color: #111;
}

.speed-ball svg {
  width: 21px;
  height: 22px;
  background: linear-gradient(#c9494b, #a8262a);
}

.speed-ball span {
  flex: 1;
  text-align: center;
}

.watermark {
  position: absolute;
  right: 5px;
  bottom: 6px;
  width: 206px;
  height: 61px;
  display: flex;
  padding: 2px;
  background: rgba(225, 232, 244, 0.4);
  opacity: 0.8;
}

.watermark svg {
  width: 60px;
  height: 58px;
}

.watermark strong,
.watermark div span {
  display: block;
  white-space: nowrap;
}

.watermark strong {
  padding-left: 6px;
  font-family: "Noto Sans CJK SC", sans-serif;
  font-size: 30px;
  line-height: 36px;
  color: #38a078;
}

.watermark div span {
  margin-left: -4px;
  font-family: "Liberation Sans", sans-serif;
  font-size: 16px;
  line-height: 22px;
  color: #9bb5c9;
}

.ime {
  position: absolute;
  right: 2px;
  bottom: 4px;
  width: 129px;
  height: 18px;
  display: flex;
  align-items: center;
  justify-content: space-between;
  padding: 0 2px;
  background: rgba(255, 255, 255, 0.8);
  border: 1px solid #c9dcf0;
  font-size: 14px;
  line-height: 16px;
  color: #4a8ad5;
}

.ime svg {
  width: 15px;
  height: 15px;
}

.ime b {
  font-weight: normal;
}
```
